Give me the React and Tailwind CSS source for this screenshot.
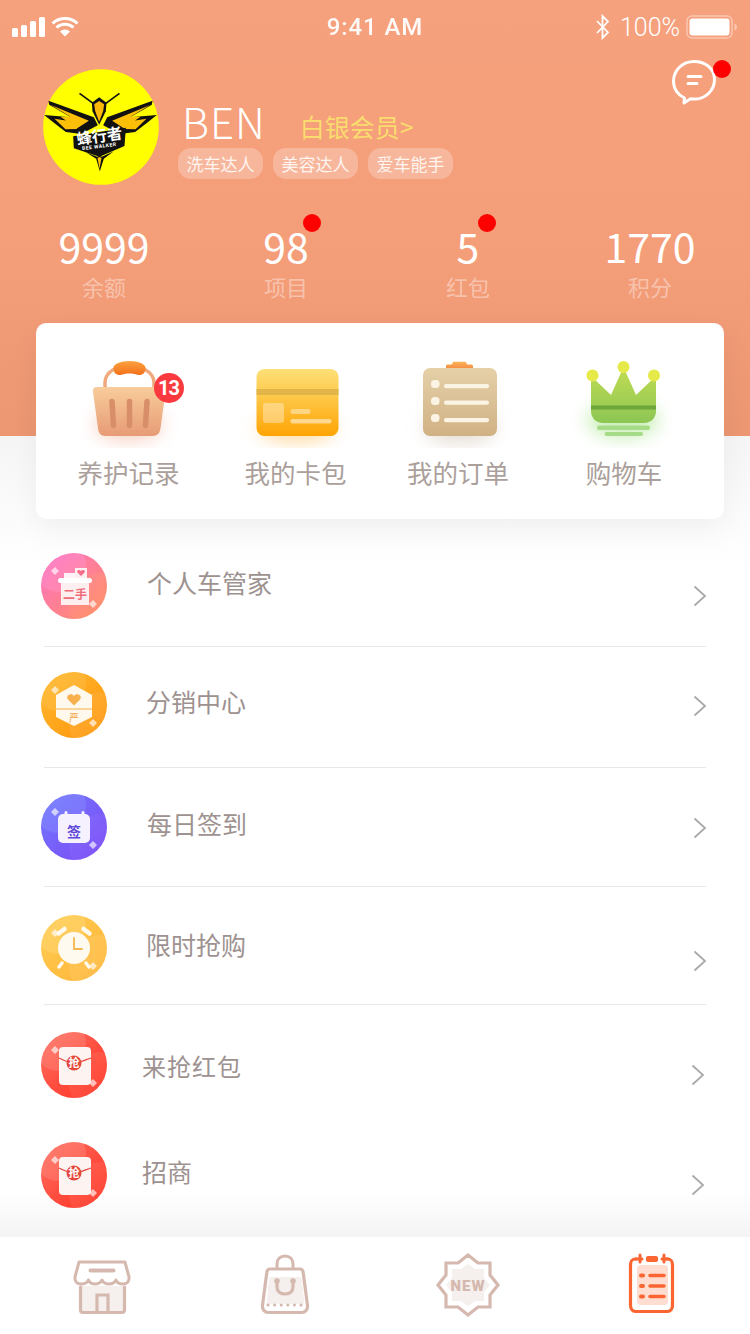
const STATS = [
  { value: "9999", label: "余额" },
  { value: "98", label: "项目", dotClass: "-right-[12px]" },
  { value: "5", label: "红包", dotClass: "-right-[17px]" },
  { value: "1770", label: "积分" },
];

const TAGS = ["洗车达人", "美容达人", "爱车能手"];

function StatusBar() {
  return (
    <div className="flex h-[54px] items-center justify-between pl-3 pr-3 text-white font-['Roboto',sans-serif]">
      <div className="flex w-[200px] items-center">
        <svg width="70" height="26" viewBox="12 14 70 26">
          <rect x="12" y="28" width="6" height="9" rx="1.5" fill="#fff" />
          <rect x="21" y="25" width="6" height="12" rx="1.5" fill="#fff" />
          <rect x="30" y="21" width="6" height="16" rx="1.5" fill="#fff" />
          <rect x="39" y="17" width="6" height="20" rx="1.5" fill="#fff" />
          <path d="M52.5 23.5a18 18 0 0 1 25 0M56.5 27.5a12.5 12.5 0 0 1 17 0" stroke="#fff" strokeWidth="3" fill="none" />
          <path d="M60 31.5a7 7 0 0 1 10 0L65 36.5z" fill="#fff" />
        </svg>
      </div>
      <span className="text-[24px] font-medium tracking-[0.9px] opacity-95">9:41 AM</span>
      <div className="flex w-[200px] items-center justify-end">
        <svg width="16" height="26" viewBox="0 0 16 26" className="mr-[9px]">
          <path d="M2 7l11 11.5L7.5 24V2L13 7.500 2 19" stroke="#fff" strokeWidth="1.800" fill="none" />
        </svg>
        <span className="mr-[6px] text-[25px] font-light leading-none">100%</span>
        <svg width="52" height="24" viewBox="0 0 52 24">
          <rect x="1" y="1" width="45" height="22" rx="5" fill="none" stroke="#fff" strokeOpacity="0.4" strokeWidth="1.500" />
          <rect x="3.500" y="3.500" width="40" height="17" rx="3" fill="#fff" />
          <path d="M48.500 8.500c1.600.5 2.500 1.800 2.500 3.500s-.9 3-2.500 3.500z" fill="#fff" fillOpacity="0.4" />
        </svg>
      </div>
    </div>
  );
}

function BeeLogo() {
  return (
    <svg width="116" height="116" viewBox="38 27 347 348" className="shrink-0">
      <circle cx="211.500" cy="201" r="173.500" fill="#ffff00" />
      <path d="M147 100l45 33M267 100l-45 33" stroke="#111" strokeWidth="5" />
      {/* left wing, then the same one mirrored round the body */}
      <g>
        <path d="M54 122L190 172l12 24-50 26-46-6-34-26-31-25 80 7-65-38z" fill="#111" />
        <path d="M61 135l114 47-35 23-50-35h30zM72 176l58 9 10 22-35 1z" fill="#fcbf08" />
      </g>
      <g transform="translate(420 0) scale(-1 1)">
        <path d="M54 122L190 172l12 24-50 26-46-6-34-26-31-25 80 7-65-38z" fill="#111" />
        <path d="M61 135l114 47-35 23-50-35h30zM72 176l58 9 10 22-35 1z" fill="#fcbf08" />
      </g>
      <path d="M184 128l22-16 22 16-2 26-20 40-20-40z" fill="#111" />
      <path d="M191 133l15-10 15 10-3 20-12 32-12-32z" fill="#fcb808" />
      <path d="M128 229l158-26-4 55-75 32-77-25z" fill="#111" />
      <text x="209" y="245" textAnchor="middle" transform="rotate(-8 209 245)" fontSize="46" fontWeight="700" fill="#fff" fontFamily="'Noto Sans CJK SC',sans-serif">蜂行者</text>
      <text x="207" y="264" textAnchor="middle" transform="rotate(-7 207 264)" fontSize="15" fontWeight="700" fill="#fff" letterSpacing="1.500" fontFamily="'Roboto',sans-serif">BEE WALKER</text>
      <path d="M165 276l35 14 7-3 7 3 36-16-30 22-12 38-11-38z" fill="#111" />
      <path d="M201 294l6 32 6-32-6-3z" fill="#fcbf08" />
    </svg>
  );
}

function ChatIcon() {
  return (
    <svg width="46" height="46" viewBox="671 59 46 46">
      <path d="M694 61.500c-11.500 0-20.500 8.800-20.500 19.800 0 7.500 4.500 13.700 11 16.700l-.5 5 6.500-4.200c1.200.2 2.400.3 3.500.3 11.500 0 20.500-8.500 20.500-19.500s-9-18.100-20.500-18.100z" fill="none" stroke="#fff" strokeWidth="3" strokeLinejoin="round" />
      <path d="M688 76.500h13M688 83.500h9" stroke="#fff" strokeWidth="3" strokeLinecap="round" />
    </svg>
  );
}

function Header() {
  return (
    <div className="relative h-[436px] bg-[linear-gradient(to_bottom,#f6a17d,#f49d79_60%,#ec9672)]">
      <StatusBar />
      <div className="absolute right-[33px] top-[59px]">
        <ChatIcon />
        <span className="absolute left-[42px] top-[1px] h-[18px] w-[18px] rounded-full bg-[#ff0000]" />
      </div>
      <div className="mt-[15px] flex pl-[43px]">
        <BeeLogo />
        <div className="ml-[20px] pt-[24px]">
          <div className="flex h-[55px] items-end pl-[3px]">
            <span className="mb-[2px] text-[42px] font-light leading-[50px] tracking-[1px] text-white">BEN</span>
            <span className="mb-[5px] ml-[34px] text-[25px] leading-[34px] text-[#fadc6e]">白银会员&gt;</span>
          </div>
          <div className="-ml-[1px] flex gap-[10px]">
            {TAGS.map((tag) => (
              <span key={tag} className="flex h-[31px] w-[85px] items-center justify-center rounded-[13px] bg-white/25 text-[17px] text-white/85">
                {tag}
              </span>
            ))}
          </div>
        </div>
      </div>
      <div className="mt-[35px] grid w-[741px] grid-cols-4 pl-[13px]">
        {STATS.map((stat) => (
          <div key={stat.label} className="flex flex-col items-center">
            <span className="relative text-[41px] font-normal leading-[50px] text-white">
              {stat.value}
              {stat.dotClass && <span className={`absolute -top-[6px] h-[18px] w-[18px] rounded-full bg-[#ff0000] ${stat.dotClass}`} />}
            </span>
            <span className="text-[22px] leading-[32px] text-white/40">{stat.label}</span>
          </div>
        ))}
      </div>
    </div>
  );
}

function BasketIcon() {
  return (
    <div className="relative h-[96px] w-[120px]">
      <svg width="120" height="96" viewBox="68.500 352 120 96">
        <defs>
          <linearGradient id="basketBody" x1="0" y1="0" x2="0" y2="1">
            <stop offset="0" stopColor="#f8cc9b" />
            <stop offset="1" stopColor="#e79b76" />
          </linearGradient>
          <linearGradient id="basketCap" x1="0" y1="0" x2="0" y2="1">
            <stop offset="0" stopColor="#fba23f" />
            <stop offset="1" stopColor="#f4701b" />
          </linearGradient>
          <filter id="blur1" x="-50%" y="-50%" width="200%" height="200%"><feGaussianBlur stdDeviation="9" /></filter>
        </defs>
        <ellipse cx="128" cy="425" rx="34" ry="16" fill="#ef9a7a" opacity="0.45" filter="url(#blur1)" />
        <path d="M104.500 388v-5c0-11 11-17 24-17s25 6 25 17v5" fill="none" stroke="#efa97c" strokeWidth="3.500" />
        <path d="M113 368c0-4 7-7 16-7s16 3 16 7c0 5-3 7-6 7-3 0-4-1.500-10-1.500s-7 1.500-10 1.500c-3 0-6-2-6-7z" fill="url(#basketCap)" />
        <path d="M97 387H160C164 387 165.500 389 165 392L160 428C159.500 433 157 436 152 436H105C100 436 98 433 97.500 428L92.500 392C92 389 93 387 97 387Z" fill="url(#basketBody)" />
        <path d="M111.500 401.500l1.500 24M129 401.500v24M146.500 401.500l-1.500 24" stroke="#d88e69" strokeWidth="5.500" strokeLinecap="round" />
      </svg>
      <span className="absolute left-[85px] top-[21px] flex h-[30px] w-[30px] items-center justify-center rounded-full bg-[#fb3a3f] text-[20px] font-bold leading-none tracking-[-1px] text-white font-['Roboto',sans-serif]">
        13
      </span>
    </div>
  );
}

function WalletIcon() {
  return (
    <svg width="120" height="96" viewBox="235.500 352 120 96">
      <defs>
        <linearGradient id="walletBody" x1="0" y1="0" x2="0" y2="1">
          <stop offset="0" stopColor="#fde078" />
          <stop offset="1" stopColor="#ffa404" />
        </linearGradient>
        <filter id="blur2" x="-50%" y="-50%" width="200%" height="200%"><feGaussianBlur stdDeviation="9" /></filter>
      </defs>
      <ellipse cx="296" cy="428" rx="38" ry="15" fill="#ffc265" opacity="0.55" filter="url(#blur2)" />
      <rect x="256" y="369" width="82" height="67" rx="8" fill="url(#walletBody)" />
      <rect x="256" y="389" width="82" height="6" fill="#e2b548" />
      <rect x="262.500" y="403" width="21" height="20" rx="3" fill="#fff" opacity="0.35" />
      <rect x="290" y="409" width="20" height="5" rx="2.500" fill="#fff" opacity="0.4" />
      <rect x="290" y="419" width="41" height="4.500" rx="2.200" fill="#fff" opacity="0.5" />
    </svg>
  );
}

function ClipboardIcon() {
  return (
    <svg width="120" height="96" viewBox="398 352 120 96">
      <defs>
        <linearGradient id="clipBody" x1="0" y1="0" x2="0" y2="1">
          <stop offset="0" stopColor="#e5d0a8" />
          <stop offset="1" stopColor="#d0b184" />
        </linearGradient>
        <linearGradient id="clipTop" x1="0" y1="0" x2="0" y2="1">
          <stop offset="0" stopColor="#fbb458" />
          <stop offset="1" stopColor="#f68f45" />
        </linearGradient>
        <filter id="blur3" x="-50%" y="-50%" width="200%" height="200%"><feGaussianBlur stdDeviation="9" /></filter>
      </defs>
      <ellipse cx="460" cy="428" rx="36" ry="15" fill="#c9b9a7" opacity="0.5" filter="url(#blur3)" />
      <path d="M446 368v-2c0-1 .8-1.500 2-1.500h4l.5-1.500c.3-.8 1-1.200 2-1.200h10c1 0 1.700.4 2 1.200l.5 1.500h4c1.200 0 2 .5 2 1.500v2z" fill="url(#clipTop)" />
      <rect x="423" y="368" width="74" height="68" rx="7" fill="url(#clipBody)" />
      <rect x="431" y="380" width="8.500" height="8" rx="3.500" fill="#fbf3e3" />
      <rect x="431" y="397" width="8.500" height="8" rx="3.500" fill="#fbf3e3" />
      <rect x="431" y="414" width="8.500" height="8" rx="3.500" fill="#fbf3e3" />
      <rect x="444" y="384" width="45" height="4.200" rx="2" fill="#fbf3e3" />
      <rect x="444" y="400.500" width="45" height="4.200" rx="2" fill="#fbf3e3" />
      <rect x="444" y="418" width="45" height="4.200" rx="2" fill="#fbf3e3" />
    </svg>
  );
}

function CrownIcon() {
  return (
    <svg width="120" height="96" viewBox="564 352 120 96">
      <defs>
        <linearGradient id="crownBody" x1="0" y1="0" x2="0" y2="1">
          <stop offset="0" stopColor="#c2dc54" />
          <stop offset="1" stopColor="#8cc653" />
        </linearGradient>
        <filter id="blur4" x="-50%" y="-50%" width="200%" height="200%"><feGaussianBlur stdDeviation="9" /></filter>
      </defs>
      <ellipse cx="623" cy="420" rx="36" ry="18" fill="#a9e58a" opacity="0.6" filter="url(#blur4)" />
      <path d="M591 376l20 19 12.500-28 12.500 28 20-19v35c0 7-5 12-12 12h-41c-7 0-12-5-12-12z" fill="url(#crownBody)" />
      <rect x="591" y="405.500" width="65" height="4" fill="#6fa63c" />
      <ellipse cx="592.500" cy="375.500" rx="6" ry="6" fill="#e6ea48" />
      <ellipse cx="623.500" cy="367" rx="6" ry="6" fill="#e6ea48" />
      <ellipse cx="654" cy="375.500" rx="6" ry="6" fill="#e6ea48" />
      <rect x="597" y="425.500" width="53" height="4.500" rx="2" fill="#a6dc88" />
      <rect x="604.500" y="432" width="38.500" height="4" rx="2" fill="#a6dc88" />
    </svg>
  );
}

const SHORTCUTS = [
  { label: "养护记录", width: "w-[185px]", icon: <BasketIcon /> },
  { label: "我的卡包", width: "w-[149px]", icon: <WalletIcon /> },
  { label: "我的订单", width: "w-[176px]", icon: <ClipboardIcon /> },
  { label: "购物车", width: "w-[156px]", icon: <CrownIcon /> },
];

function ShortcutCard() {
  return (
    <div className="relative z-10 ml-[36px] mr-[26px] -mt-[113px] flex h-[196px] rounded-[10px] bg-white pt-[29px] shadow-[0_10px_30px_rgba(0,0,0,0.05)]">
      {SHORTCUTS.map((item) => (
        <div key={item.label} className={`flex flex-col items-center ${item.width}`}>
          {item.icon}
          <span className="mt-[6px] text-[25.5px] leading-[36px] text-[#ab9f9b]">{item.label}</span>
        </div>
      ))}
    </div>
  );
}

function Diamond({ x, y, s = 4 }) {
  return <path d={`M${x} ${y - s}l${s} ${s}-${s} ${s}-${s}-${s}z`} fill="#fff" opacity="0.65" />;
}

function RoundIcon({ id, from, to, blob, arc, children }) {
  return (
    <svg width="66" height="66" viewBox="0 0 66 66" className="shrink-0">
      <defs>
        <linearGradient id={id} x1="0.1" y1="0.1" x2="0.85" y2="0.9">
          <stop offset="0" stopColor={from} />
          <stop offset="1" stopColor={to} />
        </linearGradient>
        <clipPath id={`${id}-clip`}><circle cx="33" cy="33" r="33" /></clipPath>
      </defs>
      <circle cx="33" cy="33" r="33" fill={`url(#${id})`} />
      <g clipPath={`url(#${id}-clip)`}>
        <circle cx="18" cy="12" r="27" fill={blob} opacity="0.3" />
        <circle cx="60" cy="52" r="32" fill={arc} opacity="0.22" />
      </g>
      <Diamond x={14} y={18} />
      <Diamond x={52} y={51} />
      {children}
    </svg>
  );
}

const glyphFont = "'Noto Sans CJK SC',sans-serif";

function RedPacket({ id }) {
  return (
    <RoundIcon id={id} from="#ff6b5e" to="#ff3526" blob="#ff9f92" arc="#ff8a78">
      <rect x="18" y="15" width="32" height="38" rx="4" fill="#fdf3f1" />
      <path d="M18 26c5 2.500 10 5 15 5s10-2.500 17-5" fill="none" stroke="#e8473c" strokeWidth="1.300" />
      <circle cx="33" cy="31" r="7.500" fill="#e4483c" />
      <text x="33" y="35" textAnchor="middle" fontSize="11" fontWeight="700" fill="#fff" fontFamily={glyphFont}>抢</text>
    </RoundIcon>
  );
}

const MENU = [
  {
    label: "个人车管家",
    rowClass: "h-[128px] border-b border-[#e8e8e8]",
    iconClass: "mt-[34px]",
    labelClass: "mt-[45px] ml-[40px] text-[25px]",
    arrowClass: "mt-[66px] mr-[-1px]",
    icon: (
      <RoundIcon id="pinkIcon" from="#ff74bf" to="#ff8a6e" blob="#ff9fd6" arc="#ffa277">
        <rect x="23" y="20" width="14" height="6" fill="#fff" opacity="0.9" />
        <rect x="34" y="15" width="12" height="11" fill="#fdeef0" />
        <path d="M40 23l-3.500-3.500c-1.500-2 1.500-3.500 3.500-1.500 2-2 5-.5 3.500 1.500z" fill="#f76d8b" />
        <rect x="17" y="25" width="34" height="5" rx="2.500" fill="#fff" />
        <rect x="20" y="30" width="28" height="22" fill="#fdeef0" />
        <text x="34" y="46" textAnchor="middle" fontSize="12" fontWeight="700" fill="#ee6d77" fontFamily={glyphFont}>二手</text>
      </RoundIcon>
    ),
  },
  {
    label: "分销中心",
    rowClass: "h-[121px] border-b border-[#e8e8e8]",
    iconClass: "mt-[25px]",
    labelClass: "mt-[36px] ml-[39px] text-[25px]",
    arrowClass: "mt-[48px] mr-[-1px]",
    icon: (
      <RoundIcon id="orangeIcon" from="#ffb72d" to="#ff980f" blob="#ffc85e" arc="#ffc06a">
        <path d="M33 13l18 10v22l-18 9-18-9V23z" fill="#fff8ec" />
        <path d="M15 37h36" stroke="#f6b04a" strokeWidth="1" />
        <path d="M33 33.500l-6-6c-3-4 3.500-7.500 6-3.500 2.500-4 9-.5 6 3.500z" fill="#f7b04e" />
        <text x="33" y="50" textAnchor="middle" fontSize="10" fill="#f2a64a" fontFamily={glyphFont}>严</text>
      </RoundIcon>
    ),
  },
  {
    label: "每日签到",
    rowClass: "h-[119px] border-b border-[#e8e8e8]",
    iconClass: "mt-[26px]",
    labelClass: "mt-[37px] ml-[40px] text-[25px]",
    arrowClass: "mt-[49px] mr-[-1px]",
    icon: (
      <RoundIcon id="purpleIcon" from="#7476ff" to="#7a4df5" blob="#8f9cff" arc="#9d7bff">
        <rect x="17" y="20" width="32" height="29" rx="5" fill="#f5f1ff" />
        <rect x="23.500" y="17" width="3" height="6" rx="1.500" fill="#f5f1ff" />
        <rect x="40.500" y="17" width="3" height="6" rx="1.500" fill="#f5f1ff" />
        <text x="33" y="43" textAnchor="middle" fontSize="14" fontWeight="700" fill="#5e49d8" fontFamily={glyphFont}>签</text>
      </RoundIcon>
    ),
  },
  {
    label: "限时抢购",
    rowClass: "h-[118px] border-b border-[#e8e8e8]",
    iconClass: "mt-[28px]",
    labelClass: "mt-[39px] ml-[39px] text-[25px]",
    arrowClass: "mt-[63px] mr-[-1px]",
    icon: (
      <RoundIcon id="yellowIcon" from="#ffcb52" to="#ffb73a" blob="#ffe28c" arc="#ffd78a">
        <circle cx="33" cy="33" r="16" fill="#fffaf0" />
        <path d="M17.500 18.500l6-4.500M48.500 18.500l-6-4.500" stroke="#fffaf0" strokeWidth="4.500" strokeLinecap="round" />
        <path d="M21 48l-3 4M45 48l3 4" stroke="#fffaf0" strokeWidth="3.500" strokeLinecap="round" />
        <path d="M33 23v11h8" fill="none" stroke="#f5b64f" strokeWidth="1.800" strokeLinecap="round" />
      </RoundIcon>
    ),
  },
  {
    label: "来抢红包",
    rowClass: "h-[110px]",
    iconClass: "mt-[27px]",
    labelClass: "mt-[43px] ml-[35px] text-[24px] tracking-[1px]",
    arrowClass: "mt-[59px] mr-[1px]",
    icon: <RedPacket id="redIconA" />,
  },
  {
    label: "招商",
    rowClass: "flex-1",
    iconClass: "mt-[27px]",
    labelClass: "mt-[38px] ml-[35px] text-[25px]",
    arrowClass: "mt-[59px] mr-[1px]",
    icon: <RedPacket id="redIconB" />,
  },
];

function MenuList() {
  return (
    <div className="flex flex-1 flex-col">
      {MENU.map((item) => (
        <div key={item.label} className={`mx-[44px] flex items-start ${item.rowClass}`}>
          <div className={`-ml-[3px] ${item.iconClass}`}>{item.icon}</div>
          <span className={`flex-1 leading-[36px] text-[#9d9290] ${item.labelClass}`}>{item.label}</span>
          <svg width="14" height="22" viewBox="0 0 14 22" className={item.arrowClass}>
            <path d="M1.500 1.500L12 11 1.500 20.500" fill="none" stroke="#a9a9a9" strokeWidth="1.800" />
          </svg>
        </div>
      ))}
    </div>
  );
}

const NAV_STROKE = "#d5b9af";

function TabBar() {
  return (
    <div className="grid h-[97px] w-[750px] grid-cols-[183px_183px_184px_184px] items-center bg-white pl-[10px]">
      <svg width="70" height="70" viewBox="66.500 1250 70 70" className="justify-self-center">
        <path d="M80.500 1285v21c0 3 1.500 5 4 5h35c2.500 0 4-2 4-5v-21" fill="#f5f0ee" />
        <path d="M80 1286V1309c0 1.500 1 2.500 2.500 2.500h39c1.500 0 2.500-1 2.500-2.500V1286M96.500 1311v-17h11v17" fill="none" stroke={NAV_STROKE} strokeWidth="3.200" strokeLinecap="round" />
        <path d="M78.500 1261H124.500L128.500 1276Q129 1283 122 1283Q117 1283 115.500 1279Q113.500 1283 108.500 1283Q103.500 1283 101.500 1279Q99.500 1283 94.500 1283Q89.500 1283 88 1279Q86 1283 81 1283Q74 1283 74.500 1276Z" fill="#fff" stroke={NAV_STROKE} strokeWidth="3" strokeLinejoin="round" />
        <path d="M90 1269.500h23" stroke={NAV_STROKE} strokeWidth="4" strokeLinecap="round" />
      </svg>
      <svg width="70" height="70" viewBox="249 1250 70 70" className="justify-self-center">
        <path d="M276 1267v-4c0-5 3.500-8 8-8s8 3 8 8v4" fill="none" stroke={NAV_STROKE} strokeWidth="3" strokeLinecap="round" />
        <path d="M270 1276h28c2 0 3 1 3 3l2.500 24h-38l2.500-24c0-2 1-3 2.500-3z" fill="#f5f0ee" />
        <path d="M269 1268h30c2 0 3 1.500 3.200 3.500l4.300 33c.4 4-2.200 7-5.500 7h-34c-3.300 0-5.900-3-5.500-7l4.300-33c.2-2 1.200-3.500 3.200-3.500z" fill="none" stroke={NAV_STROKE} strokeWidth="3.200" />
        <path d="M276 1281v5c0 4.500 3.500 7 8 7s8-2.500 8-7v-5" fill="none" stroke={NAV_STROKE} strokeWidth="3.200" strokeLinecap="round" />
        <circle cx="276" cy="1280" r="2.800" fill={NAV_STROKE} />
        <circle cx="292" cy="1280" r="2.800" fill={NAV_STROKE} />
        <path d="M267 1304h34" stroke={NAV_STROKE} strokeWidth="3" strokeLinecap="round" strokeDasharray="0.100 6.500" />
      </svg>
      <svg width="70" height="70" viewBox="432 1250 70 70" className="justify-self-center">
        <path d="M467 1254l10 8h12v12l8 10-8 10v12h-12l-10 8-10-8h-12v-12l-8-10 8-10v-12h12z" fill="none" stroke={NAV_STROKE} strokeWidth="3.200" />
        <path d="M467 1263l7 5h9v9l6 7-6 7v9h-9l-7 5-7-5h-9v-9l-6-7 6-7v-9h9z" fill="#f5f0ee" />
        <text x="467" y="1290" textAnchor="middle" fontSize="15" fontWeight="900" letterSpacing="1" fill={NAV_STROKE} fontFamily="'Roboto',sans-serif">NEW</text>
      </svg>
      <svg width="70" height="70" viewBox="617 1250 70 70" className="justify-self-center">
        <path d="M637 1258h-2c-3 0-4.500 3-4.500 6v40c0 4 2 6.500 5 6.500h32c3 0 5-2.500 5-6.500v-40c0-3-1.500-6-4.500-6h-2" fill="none" stroke="#fb6531" strokeWidth="3.200" />
        <path d="M640 1254v7M664 1254v7M636 1258h6M662 1258h6" stroke="#fb6531" strokeWidth="3" strokeLinecap="round" />
        <rect x="646" y="1255" width="12" height="6" rx="2" fill="#fb6531" />
        <rect x="637" y="1264" width="31" height="40" rx="4" fill="#ffddd0" />
        <path d="M641 1274.500h2M641 1285h2M641 1295.500h2" stroke="#fb6531" strokeWidth="4" strokeLinecap="round" />
        <path d="M650 1274.500h14M650 1285h14M650 1295.500h14" stroke="#fb6531" strokeWidth="3.500" strokeLinecap="round" />
      </svg>
    </div>
  );
}

export default function App() {
  return (
    <div className="flex h-[1334px] w-[750px] flex-col overflow-hidden bg-white font-['Noto_Sans_CJK_SC','Noto_Sans',sans-serif]">
      <Header />
      <div className="flex flex-1 flex-col bg-[linear-gradient(to_bottom,#f5f5f5_0,#ffffff_130px,#ffffff_calc(100%-45px),#f4f4f4_100%)]">
        <ShortcutCard />
        <MenuList />
      </div>
      <TabBar />
    </div>
  );
}
